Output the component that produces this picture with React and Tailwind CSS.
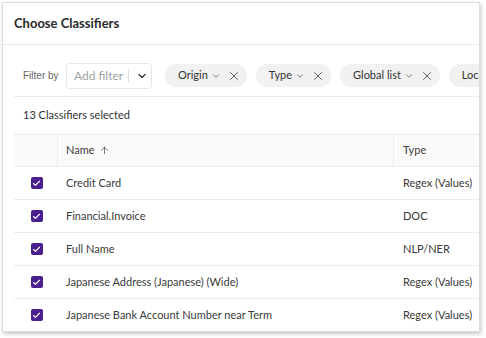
import React from "react";
import { ChevronDown, X, ArrowUp, Check } from "lucide-react";

const rows = [
  ["Credit Card", "Regex (Values)"],
  ["Financial.Invoice", "DOC"],
  ["Full Name", "NLP/NER"],
  ["Japanese Address (Japanese) (Wide)", "Regex (Values)"],
  ["Japanese Bank Account Number near Term", "Regex (Values)"],
];

function Chip({ label }) {
  return (
    <div className="flex h-[23px] shrink-0 items-center whitespace-nowrap rounded-full bg-[#f1f1f1] pl-[13px] pr-[6px] text-[11px] text-[#333]">
      <span>{label}</span>
      <ChevronDown size={10} strokeWidth={1.8} className="ml-[3px] mt-[1px] text-[#555]" />
      <X size={14} strokeWidth={1.4} className="ml-[6px] text-[#444]" />
    </div>
  );
}

function Box() {
  return (
    <div className="flex h-[12px] w-[12px] items-center justify-center rounded-[2px] bg-[#4a1f90]">
      <Check size={9} strokeWidth={3} className="text-white" />
    </div>
  );
}

export default function App() {
  return (
    <div className="h-[338px] w-[486px] bg-white" style={{ fontFamily: "Lato, 'Noto Sans', sans-serif" }}>
      <div className="ml-[2px] mt-[2px] h-[330px] w-[478px] overflow-hidden border border-[#dcdcdc] bg-white shadow-[1px_2px_4px_rgba(0,0,0,0.22)]">
        <div className="flex h-[42px] items-center border-b border-[#ececec] px-[11px] pt-[1px] text-[13px] font-bold text-[#2a2a2a]">
          Choose Classifiers
        </div>
        <div className="ml-[11px] flex flex-col">
          <div className="flex h-[52px] items-center border-b border-[#ececec] pl-[9px] pt-[10px]">
            <span className="w-[43px] shrink-0 text-[10px] text-[#666]" style={{ fontFamily: "'Liberation Sans', Arial, sans-serif" }}>Filter by</span>
            <div className="flex h-[26px] w-[86px] shrink-0 items-center rounded-[4px] border border-[#e6e6e6] pl-[7px]">
              <span className="whitespace-nowrap text-[12px] text-[#a0a0a0]">Add filter</span>
              <span className="ml-[5px] h-[13px] w-px bg-[#ddd]" />
              <ChevronDown size={12} strokeWidth={2.6} className="ml-[7px] text-[#333]" />
            </div>
            <div className="ml-[13px] flex gap-[9px]">
              <Chip label="Origin" />
              <Chip label="Type" />
              <Chip label="Global list" />
              <Chip label="Location" />
            </div>
          </div>
          <div className="flex h-[37px] items-center pl-[9px] text-[11px] text-[#333]">13 Classifiers selected</div>
          <div className="w-[520px] text-[11px] text-[#3a3a3a]">
            <div className="flex h-[33px] items-center border-y border-[#ececec] bg-[#fafafa]">
              <div className="h-full w-[44px] border-r border-[#ececec]" />
              <div className="flex h-full w-[336px] items-center border-r border-[#ececec] pl-[8px]">
                Name
                <ArrowUp size={11} strokeWidth={1.5} className="ml-[4px]" />
              </div>
              <div className="pl-[9px]">Type</div>
            </div>
            {rows.map(([n, t]) => (
              <div key={n} className="flex h-[33px] items-center border-b border-[#ececec]">
                <div className="flex w-[44px] justify-center pl-[1px]">
                  <Box />
                </div>
                <div className="w-[336px] pl-[8px]">{n}</div>
                <div className="pl-[9px]">{t}</div>
              </div>
            ))}
          </div>
        </div>
      </div>
    </div>
  );
}
